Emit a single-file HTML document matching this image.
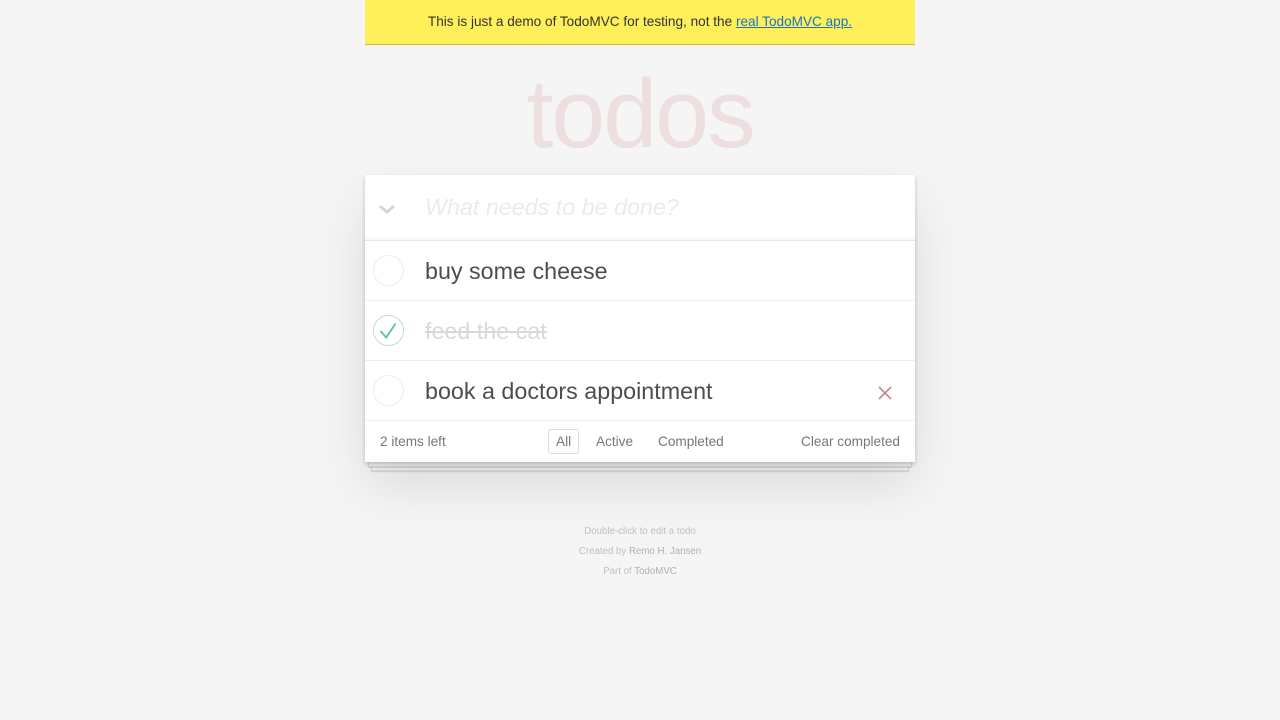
<!DOCTYPE html>
<html><head><meta charset="utf-8"><style>
*{box-sizing:border-box;margin:0;padding:0}
body{background:#f5f5f5;font-family:"Liberation Sans",Helvetica,Arial,sans-serif;font-size:14px;color:#4d4d4d;width:1280px;height:720px;overflow:hidden;position:relative}
.banner{position:absolute;left:365px;top:0;width:550px;height:45px;background:#fff05a;border-bottom:1px solid #c9bd3a;text-align:center;line-height:44px;font-size:13.6px;color:#333}
.banner a{color:#1a73c8;text-decoration:underline}
h1{position:absolute;left:365px;width:550px;top:64px;text-align:center;font-size:97px;font-weight:100;line-height:100px;color:rgba(175,47,47,0.11);letter-spacing:-2px}
.app{position:absolute;left:365px;top:175px;width:550px;background:#fff;box-shadow:0 2px 4px rgba(0,0,0,.2),0 25px 50px rgba(0,0,0,.1)}
.new{height:66px;position:relative;box-shadow:inset 0 -2px 1px rgba(0,0,0,.03);border-bottom:1px solid #e6e6e6}
.new span{position:absolute;left:60px;top:19px;font-size:23.3px;font-style:italic;color:#ebebeb;font-weight:300}
.chev{position:absolute;left:12px;top:24px;width:20px;height:20px}
.item{height:60px;border-bottom:1px solid #ededed;position:relative}
.item .c{position:absolute;left:8px;top:14px;width:31px;height:31px;border:1px solid #ededed;border-radius:50%}
.item .c.done{border-color:#bddad5}
.item .l{position:absolute;left:60px;top:15px;font-size:23.3px;line-height:30px;color:#4d4d4d;font-weight:300}
.item .l.done{color:#d9d9d9;text-decoration:line-through}
.x{position:absolute;right:22px;top:24px;width:16px;height:16px}
.foot{height:41px;position:relative;color:#777;font-size:13.6px}
.foot .cnt{position:absolute;left:15px;top:13px}
.foot .f{position:absolute;top:8px;height:25px;line-height:23px;padding:0 7px;border:1px solid transparent;border-radius:3px}
.foot .sel{border-color:rgba(175,47,47,.2)}
.foot .clr{position:absolute;right:15px;top:13px}
.s1,.s2{position:absolute;background:#f6f6f6;border:1px solid #ddd;border-top:none}
.s1{left:368px;top:461px;width:544px;height:6px;box-shadow:0 1px 1px rgba(0,0,0,.15)}
.s2{left:371px;top:465px;width:538px;height:6px;box-shadow:0 1px 1px rgba(0,0,0,.15)}
.info{position:absolute;top:522px;left:0;width:1280px;text-align:center;font-size:9.7px;line-height:20px;color:#bfbfbf}
.info b{font-weight:normal;color:#b0b0b0}
</style></head><body>
<div class="banner">This is just a demo of TodoMVC for testing, not the <a>real TodoMVC app.</a></div>
<h1>todos</h1>
<div class="s2"></div><div class="s1"></div>
<div class="app">
<div class="new"><svg class="chev" viewBox="0 0 20 20"><path d="M3 7 L10 13 L17 7" fill="none" stroke="#d6d6d6" stroke-width="3"/></svg><span>What needs to be done?</span></div>
<div class="item"><div class="c"></div><div class="l">buy some cheese</div></div>
<div class="item"><div class="c done"><svg viewBox="0 0 31 31" width="29" height="29"><path d="M7 16 L13 23 L23 8" fill="none" stroke="#5dc2af" stroke-width="2"/></svg></div><div class="l done">feed the cat</div></div>
<div class="item"><div class="c"></div><div class="l">book a doctors appointment</div><svg class="x" viewBox="0 0 16 16"><path d="M2 2L14 14M14 2L2 14" stroke="#c18585" stroke-width="1.6"/></svg></div>
<div class="foot"><span class="cnt">2 items left</span>
<span class="f sel" style="left:183px">All</span><span class="f" style="left:223px">Active</span><span class="f" style="left:285px">Completed</span>
<span class="clr">Clear completed</span></div>
</div>
<div class="info"><div>Double-click to edit a todo</div><div>Created by <b>Remo H. Jansen</b></div><div>Part of <b>TodoMVC</b></div></div>
</body></html>
